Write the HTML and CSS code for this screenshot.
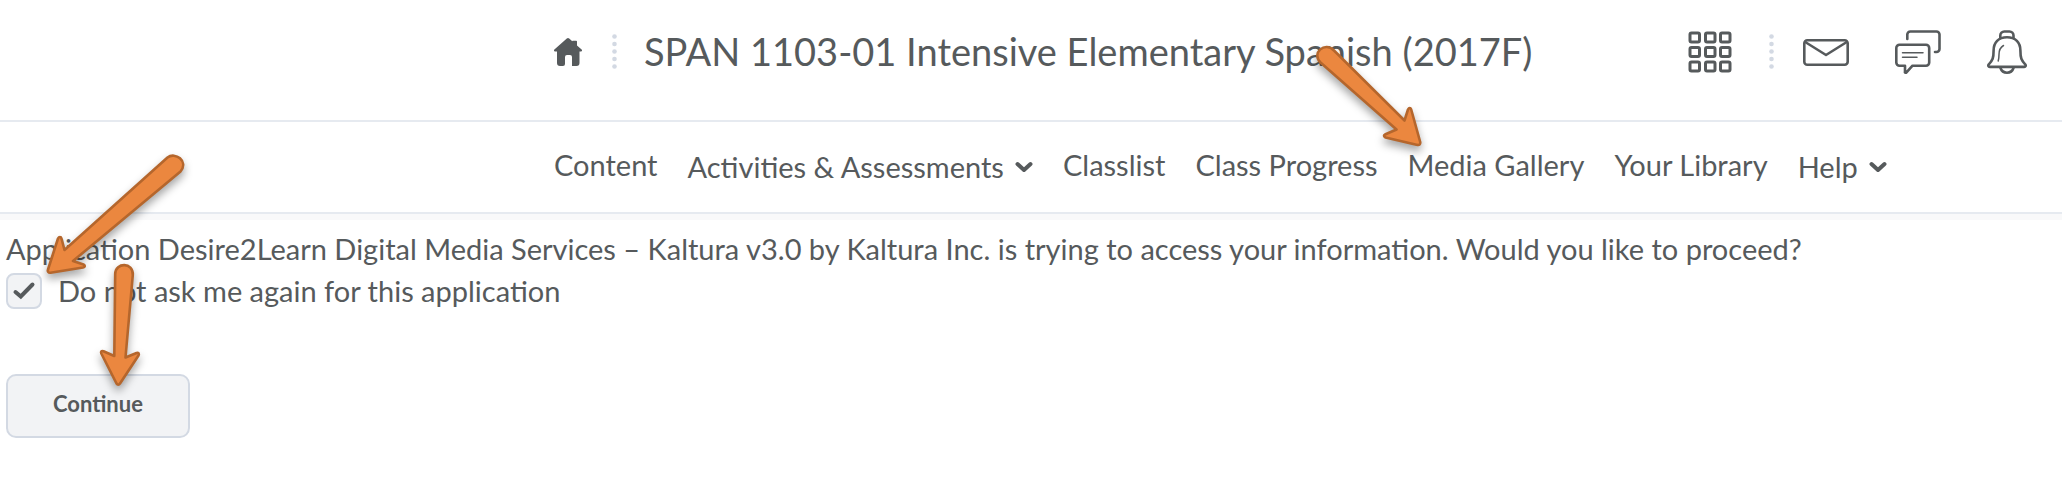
FILE: index.html
```html
<!DOCTYPE html>
<html lang="en">
<head>
<meta charset="utf-8">
<title>SPAN 1103-01 Intensive Elementary Spanish (2017F)</title>
<link rel="stylesheet" href="styles.css">
</head>
<body>
<header class="topbar">
  <a class="icon-link" href="#" aria-label="Home">
    <svg width="28" height="28" viewBox="0 0 28 28" fill="currentColor"><path d="M12.800 .6a1.800 1.800 0 0 1 2.400 0L18 3V3.500a.8 .8 0 0 1 .8-.8h3.400a.8 .8 0 0 1 .8 .8V7.500l4.600 4.100c.8 .8 .4 2-.6 2H25.500V25a3 3 0 0 1-3 3H18V19a2 2 0 0 0-2-2h-3a2 2 0 0 0-2 2V26a2 2 0 0 1-2 2H6a3 3 0 0 1-3-3V13.600H1C0 13.600-.4 12.300 .4 11.600z"/></svg>
  </a>
  <svg class="dots" width="5" height="36" viewBox="0 0 5 36" aria-hidden="true"><circle cx="2.500" cy="2.500" r="2.300"/><circle cx="2.500" cy="10" r="2.300"/><circle cx="2.500" cy="17.500" r="2.300"/><circle cx="2.500" cy="25" r="2.300"/><circle cx="2.500" cy="32.500" r="2.300"/></svg>
  <h1 class="course"><a href="#">SPAN 1103-01 Intensive Elementary Spanish (2017F)</a></h1>
  <div class="tools">
    <button class="tool" type="button" aria-label="Select a course">
      <svg width="44" height="44" viewBox="0 0 44 44" class="line"><g stroke-width="3"><rect x="2" y="3" width="9.500" height="9" rx="1.500"/><rect x="17.500" y="3" width="9.500" height="9" rx="1.500"/><rect x="32.500" y="3" width="9.500" height="9" rx="1.500"/><rect x="2" y="17.500" width="9.500" height="9" rx="1.500"/><rect x="17.500" y="17.500" width="9.500" height="9" rx="1.500"/><rect x="32.500" y="17.500" width="9.500" height="9" rx="1.500"/><rect x="2" y="32" width="9.500" height="9" rx="1.500"/><rect x="17.500" y="32" width="9.500" height="9" rx="1.500"/><rect x="32.500" y="32" width="9.500" height="9" rx="1.500"/></g></svg>
    </button>
    <svg class="dots" width="5" height="36" viewBox="0 0 5 36" aria-hidden="true"><circle cx="2.500" cy="2.500" r="2.300"/><circle cx="2.500" cy="10" r="2.300"/><circle cx="2.500" cy="17.500" r="2.300"/><circle cx="2.500" cy="25" r="2.300"/><circle cx="2.500" cy="32.500" r="2.300"/></svg>
    <div class="alerts">
      <button class="tool" type="button" aria-label="Messages">
        <svg width="46" height="44" viewBox="0 0 46 44" class="line"><rect x="1.300" y="10.300" width="43.400" height="24.400" rx="3"/><path d="M3 12.500 23 25 43 12.500"/></svg>
      </button>
      <button class="tool" type="button" aria-label="Discussions">
        <svg width="46" height="44" viewBox="0 0 46 44" class="line"><path d="M12.300 9V4.500a3 3 0 0 1 3-3H41.500a3 3 0 0 1 3 3V19a3 3 0 0 1-3 3H40"/><path d="M4.500 14.800H31a3.200 3.200 0 0 1 3.200 3.200V32.500a3.200 3.200 0 0 1-3.200 3.200H17.500L11.500 42.300a.8 .8 0 0 1-1.500-.6V35.700H4.500a3.200 3.200 0 0 1-3.200-3.200V18a3.200 3.200 0 0 1 3.200-3.200z"/><path class="thin" d="M7.500 22.700H28M7.500 27.200H22"/></svg>
      </button>
      <button class="tool" type="button" aria-label="Notifications">
        <svg width="40" height="44" viewBox="0 0 40 44" class="line"><path d="M13.300 8V5.500a4 4 0 0 1 4-4H22.500a4 4 0 0 1 4 4V8"/><path d="M20 7.300C11.500 7.300 6.600 12.500 6.600 20.500 6.600 28 5.600 30.500 1.800 34.300 .8 35.600 1.300 36.900 2.800 36.900H37.200C38.700 36.900 39.200 35.600 38.200 34.300 34.400 30.500 33.400 28 33.400 20.500 33.400 12.500 28.500 7.300 20 7.300z"/><path d="M13.500 38c1 3 3.500 4.700 6.500 4.700S25.500 41 26.500 38"/><path class="thin" d="M16.500 15.500C13 17.500 12 20.500 12 24.500 12 27 11.800 29 11.200 31"/></svg>
      </button>
    </div>
  </div>
</header>
<nav class="navbar" aria-label="Course">
  <a class="nav-item" href="#">Content</a>
  <button class="nav-item menu" type="button">Activities &amp; Assessments
    <svg width="18" height="12" viewBox="0 0 18 12" class="caret"><path d="M2.500 3 9 9 15.500 3"/></svg></button>
  <a class="nav-item" href="#">Classlist</a>
  <a class="nav-item" href="#">Class Progress</a>
  <a class="nav-item" href="#">Media Gallery</a>
  <a class="nav-item" href="#">Your Library</a>
  <button class="nav-item menu" type="button">Help
    <svg width="18" height="12" viewBox="0 0 18 12" class="caret"><path d="M2.500 3 9 9 15.500 3"/></svg></button>
</nav>
<main class="page">
  <p class="message">Application Desire2Learn Digital Media Services – Kaltura v3.0 by Kaltura Inc. is trying to access your information. Would you like to proceed?</p>
  <label class="remember" for="remember">
    <span class="check">
      <input id="remember" type="checkbox" checked>
      <svg width="36" height="36" viewBox="0 0 36 36" aria-hidden="true"><path d="M9.500 19 14.800 23.500 26.500 11.500"/></svg>
    </span>
    Do not ask me again for this application
  </label>
  <button class="continue" type="button">Continue</button>
</main>
<svg class="arrow arrow-check" width="150" height="140" viewBox="40 146 150 140" aria-hidden="true"><path d="M167.500 157.500C175 151.500 189 161 180.500 171.500L73 261 83.500 264.500C85.500 265.500 85 267 83 267.500L50.500 272.700C48.500 273 47.300 271.500 48 269.500L58 238.500C59 236.500 61 236.500 61.500 238.500L64.500 250z"/></svg>
<svg class="arrow arrow-continue" width="60" height="140" viewBox="90 256 60 140" aria-hidden="true"><path d="M115.200 274C115.500 262 133.500 262 132.800 275L125.500 357.500 136.500 353C138.500 352.500 139.500 353.800 138.500 355.500L120 383.500C119 385 117.500 385 116.500 383.500L101.300 353.500C100.500 351.500 101.500 350.500 103.500 351.200L114.300 356z"/></svg>
<svg class="arrow arrow-gallery" width="124" height="120" viewBox="1308 38 124 120" aria-hidden="true"><path d="M1320.500 62.500C1311 53 1325 41 1334 50.500L1404.500 120.500 1408 109.500C1409 107.500 1410.500 107.500 1411.200 109.500L1420.200 142C1420.500 144 1419.500 145.200 1417.500 144.900L1385.500 137.500C1383.500 136.500 1383.500 135.200 1385.500 134.300L1396.500 129.500z"/></svg>
</body>
</html>
```
FILE: styles.css
```css
* {
  box-sizing: border-box;
}

body {
  position: relative;
  margin: 0;
  background: #fff;
  color: #565a5c;
  font-family: Lato, "Open Sans", sans-serif;
  font-size: 29px;
  line-height: 42px;
}

a,
button {
  color: inherit;
  font: inherit;
  text-decoration: none;
}

button {
  padding: 0;
  border: 0;
  background: none;
  cursor: pointer;
}

svg {
  display: block;
}

.topbar {
  display: flex;
  align-items: center;
  padding: 26px 35px 42px 554px;
  border-bottom: 2px solid #e6eaf0;
}

.icon-link {
  margin-right: 30px;
}

.dots {
  flex: none;
  fill: #d3d9e3;
}

.course {
  margin: 0 0 0 27px;
  padding-bottom: 2px;
  font-size: 38px;
  font-weight: 400;
  line-height: 50px;
  white-space: nowrap;
}

.tools {
  display: flex;
  align-items: center;
  gap: 37px;
  margin-left: auto;
}

.alerts {
  display: flex;
  gap: 46px;
  margin-left: -8px;
}

.line {
  fill: none;
  stroke: currentColor;
  stroke-width: 2.6;
  stroke-linecap: round;
  stroke-linejoin: round;
}

.line .thin {
  stroke-width: 1.5;
}

.navbar {
  display: flex;
  align-items: flex-start;
  gap: 30px;
  padding: 22px 35px 24px 554px;
  border-bottom: 2px solid #e6eaf0;
  white-space: nowrap;
}

.menu {
  display: flex;
  align-items: center;
  gap: 11px;
  padding-top: 2px;
}

.caret {
  fill: none;
  stroke: currentColor;
  stroke-width: 4;
  stroke-linecap: round;
  stroke-linejoin: round;
}

.page {
  padding: 14px 6px 50px;
  background: linear-gradient(#f9f9fa 6px, #fff 6px);
}

.message {
  margin: 0;
}

.remember {
  display: flex;
  align-items: center;
  gap: 16px;
}

.check {
  display: grid;
}

.check > * {
  grid-area: 1 / 1;
}

.check input {
  width: 36px;
  height: 36px;
  margin: 0;
  appearance: none;
  border: 2px solid #d3d9e3;
  border-radius: 8px;
  background: #f2f3f5;
}

.check svg {
  visibility: hidden;
  fill: none;
  stroke: currentColor;
  stroke-width: 4;
  stroke-linecap: round;
  pointer-events: none;
}

.check input:checked + svg {
  visibility: visible;
}

.continue {
  margin-top: 62px;
  padding: 14px 45px 18px;
  border: 2px solid #d3d9e3;
  border-radius: 10px;
  background: #f2f3f5;
  font-size: 22px;
  font-weight: 700;
  line-height: 28px;
}

.arrow {
  position: absolute;
  fill: #eb873f;
  stroke: #b5662c;
  stroke-width: 2.6;
  stroke-linejoin: round;
  filter: drop-shadow(0 5px 4px rgba(0, 0, 0, 0.35));
  pointer-events: none;
}

.arrow-check {
  left: 40px;
  top: 146px;
}

.arrow-continue {
  left: 90px;
  top: 256px;
}

.arrow-gallery {
  left: 1308px;
  top: 38px;
}
```
